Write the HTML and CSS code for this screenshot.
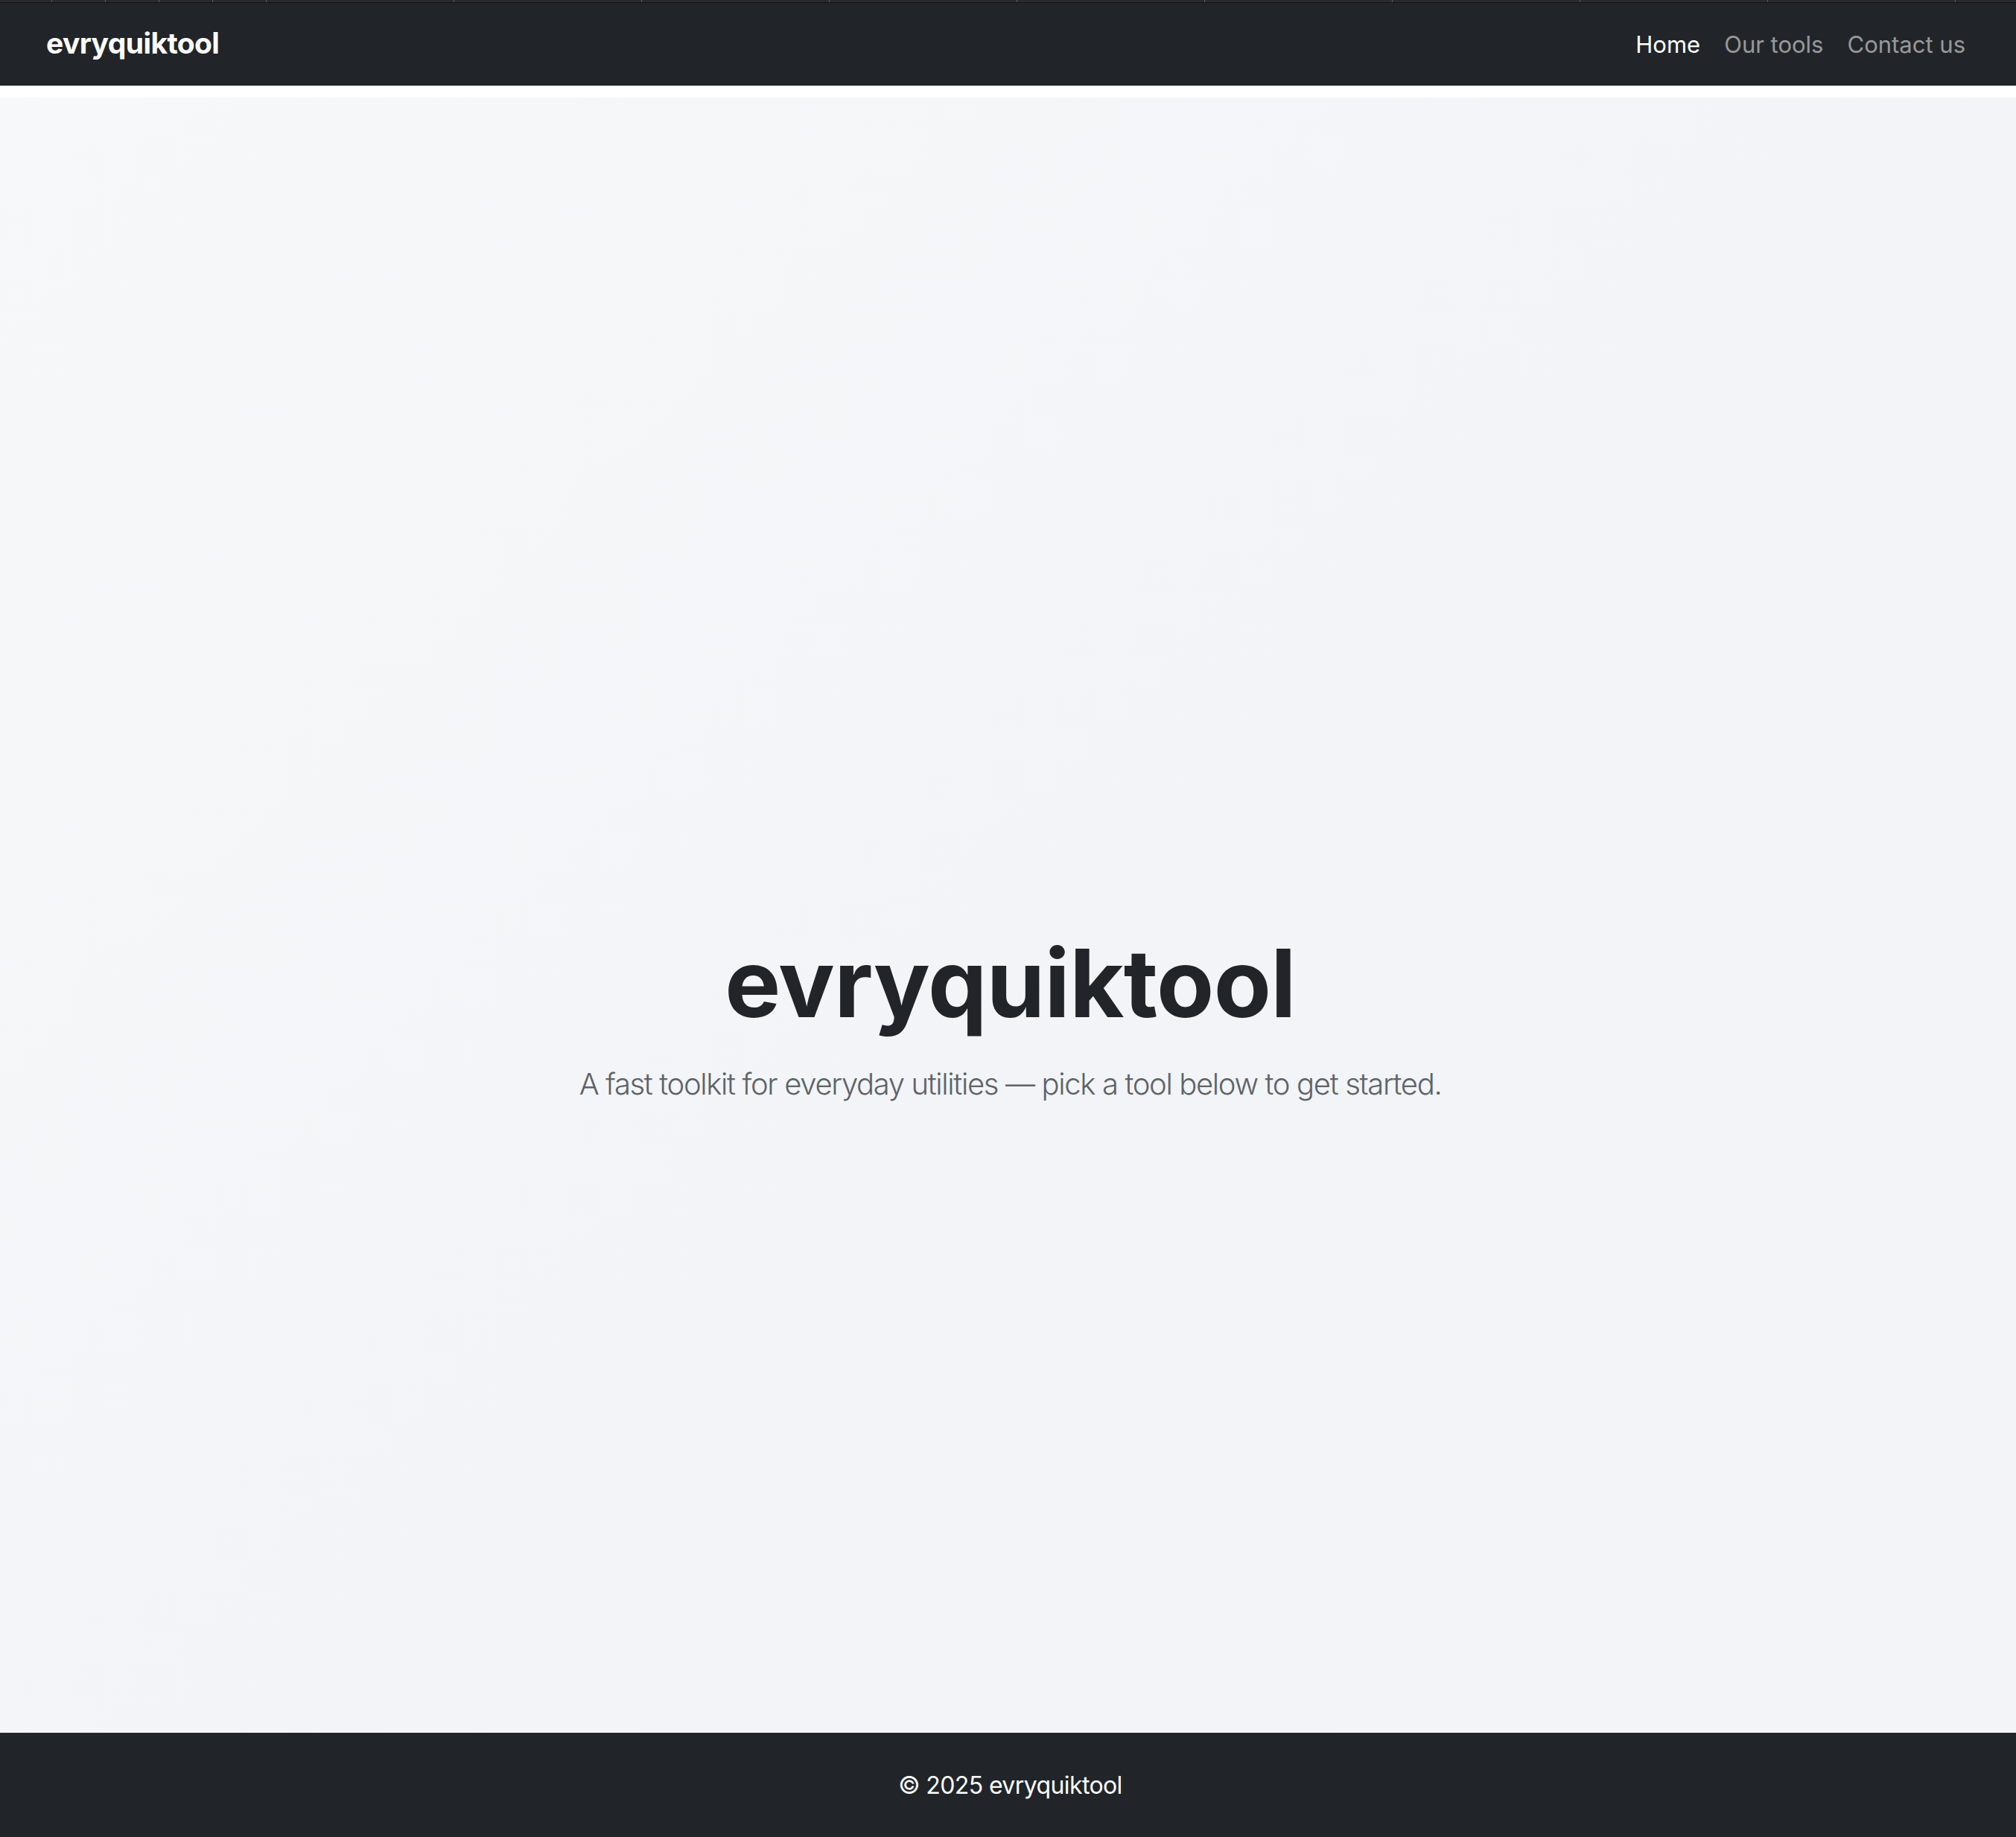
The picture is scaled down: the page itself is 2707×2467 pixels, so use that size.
FILE: index.html
```html
<!DOCTYPE html>
<html lang="en">
<head>
<meta charset="utf-8">
<title>evryquiktool</title>
<link rel="stylesheet" href="styles.css">
</head>
<body>
<div class="ruler">
  <span class="seg seg-first"></span>
  <span class="seg seg-s"></span>
  <span class="seg seg-s"></span>
  <span class="seg seg-s"></span>
  <span class="seg seg-s"></span>
  <span class="seg seg-l"></span>
  <span class="seg seg-l"></span>
  <span class="seg seg-l"></span>
  <span class="seg seg-l"></span>
  <span class="seg seg-l"></span>
  <span class="seg seg-l"></span>
  <span class="seg seg-l"></span>
  <span class="seg seg-l"></span>
  <span class="seg seg-l"></span>
</div>
<nav class="navbar">
  <a class="brand" href="#">evryquiktool</a>
  <ul class="nav-links">
    <li><a class="nav-link active" href="#">Home</a></li>
    <li><a class="nav-link" href="#">Our tools</a></li>
    <li><a class="nav-link" href="#">Contact us</a></li>
  </ul>
</nav>
<main class="hero">
  <h1 class="hero-title">evryquiktool</h1>
  <p class="hero-lead">A fast toolkit for everyday utilities — pick a tool below to get started.</p>
</main>
<footer class="footer">
  <p class="footer-text">© 2025 evryquiktool</p>
</footer>
</body>
</html>
```
FILE: styles.css
```css
* { box-sizing: border-box; }
html, body { margin: 0; padding: 0; }
body {
  background: #ffffff;
  font-family: Inter, "Noto Sans", "Liberation Sans", sans-serif;
  color: #212529;
}
.ruler {
  display: flex;
  height: 4px;
  background: #2b2b2b;
  border-bottom: 1px solid #121212;
}
.seg {
  flex: none;
  height: 3px;
  border-right: 1px solid #5a5a5a;
}
.seg-first { width: 70px; }
.seg-s { width: 72px; }
.seg-l { width: 252px; }

.navbar {
  display: flex;
  justify-content: space-between;
  align-items: flex-start;
  height: 111px;
  background: #212529;
  padding: 0 68px 0 62px;
}
.brand {
  margin-top: 34px;
  font-size: 39px;
  line-height: 39px;
  font-weight: 700;
  color: #ffffff;
  text-decoration: none;
  letter-spacing: -0.6px;
}
.nav-links {
  display: flex;
  gap: 32px;
  list-style: none;
  margin: 40px 0 0 0;
  padding: 0;
}
.nav-link {
  display: block;
  font-size: 31px;
  line-height: 31px;
  font-weight: 400;
  color: rgba(255, 255, 255, 0.55);
  text-decoration: none;
}
.nav-link.active { color: #ffffff; }

.hero {
  margin-top: 16px;
  height: 2196px;
  padding: 1114px 0 0 6px;
  text-align: center;
  background: linear-gradient(135deg, #f7f8f9 0%, #f3f4f7 55%, #f2f4f7 100%);
}
.hero-title {
  margin: 0 0 30px 0;
  font-size: 126px;
  line-height: 1.2;
  font-weight: 700;
  color: #212529;
  letter-spacing: -0.6px;
}
.hero-lead {
  margin: 0;
  font-size: 40px;
  line-height: 1.5;
  font-weight: 300;
  color: #5c636a;
  letter-spacing: -1.35px;
}

.footer {
  height: 140px;
  background: #212529;
  display: flex;
  align-items: center;
  justify-content: center;
  padding-left: 6px;
}
.footer-text {
  margin: 0;
  font-size: 32px;
  color: #ffffff;
  letter-spacing: -0.6px;
}
```
